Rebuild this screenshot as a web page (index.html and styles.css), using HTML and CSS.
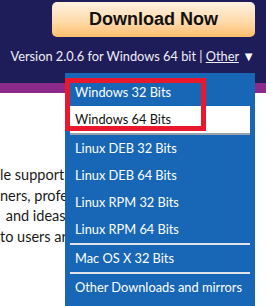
FILE: index.html
```html
<!DOCTYPE html>
<html lang="en">
<head>
  <meta charset="UTF-8">
  <title>Download</title>
  <link rel="stylesheet" href="styles.css">
</head>
<body>
  <div class="header">
    <a class="download-btn" href="#">Download Now</a>
    <div class="version">Version 2.0.6 for Windows 64 bit | <a class="other" href="#">Other</a> <span class="arrow">&#9660;</span></div>
  </div>
  <div class="band"></div>

  <div class="content">
    <p class="line l1">le support for many</p>
    <p class="line l2">ners, professionals</p>
    <p class="line l3">&nbsp;and ideas into</p>
    <p class="line l4">to users around</p>
  </div>

  <ul class="menu">
    <li class="item">Windows 32 Bits</li>
    <li class="item active">Windows 64 Bits</li>
    <li class="item">Linux DEB 32 Bits</li>
    <li class="item">Linux DEB 64 Bits</li>
    <li class="item">Linux RPM 32 Bits</li>
    <li class="item sep">Linux RPM 64 Bits</li>
    <li class="item sep">Mac OS X 32 Bits</li>
    <li class="item">Other Downloads and mirrors</li>
  </ul>

  <!-- annotation box around the windows entries -->
  <div class="mark"></div>
</body>
</html>
```

FILE: styles.css
```css
body {
  margin: 0;
  font-family: Lato, "Noto Sans", sans-serif;
  background-color: #fff;
  overflow: hidden;
  height: 306px;
}
.header {
  background-color: #1f1c5a;
  height: 83px;
  display: flex;
  flex-direction: column;
  align-items: flex-end;
  padding-right: 11px;
  box-sizing: border-box;
}
.download-btn {
  margin-top: 2px;
  width: 203px;
  height: 35px;
  border-radius: 5px;
  background: linear-gradient(#fff2e2, #ffd8a6 60%, #ffbe6c);
  color: #111;
  font-family: "Liberation Sans", Arial, sans-serif;
  font-weight: bold;
  font-size: 18px;
  line-height: 35px;
  text-align: center;
  text-decoration: none;
}
.version {
  margin-top: 11px;
  font-size: 12.8px;
  color: #eeeef6;
  white-space: nowrap;
}
.other {
  color: #eeeef6;
}
.arrow {
  font-size: 13px;
  color: #fff;
}
.band {
  height: 10px;
  background-color: #8c2a8c;
}
.content {
  padding-top: 72px;
}
.line {
  margin: 0;
  font-size: 14.5px;
  line-height: 20.5px;
  color: #1a1a1a;
  white-space: nowrap;
}
.l3 {
  padding-left: 2px;
}
.menu {
  position: absolute;
  left: 65px;
  top: 73px;
  width: 190px;
  margin: 0;
  padding: 6px 5px 5px;
  box-sizing: border-box;
  list-style: none;
  background-color: #1767b6;
}
.item {
  height: 27px;
  line-height: 27px;
  padding-left: 5px;
  font-size: 12.8px;
  color: #fff;
  white-space: nowrap;
}
.item.active {
  background-color: #fff;
  color: #111;
  border-bottom: 2px solid #9aa3ad;
}
.item.sep {
  border-bottom: 2px solid #dfe3ea;
}
.mark {
  position: absolute;
  left: 65px;
  top: 78px;
  width: 141px;
  height: 53px;
  border: 5px solid #e8192c;
  box-sizing: border-box;
}
```
